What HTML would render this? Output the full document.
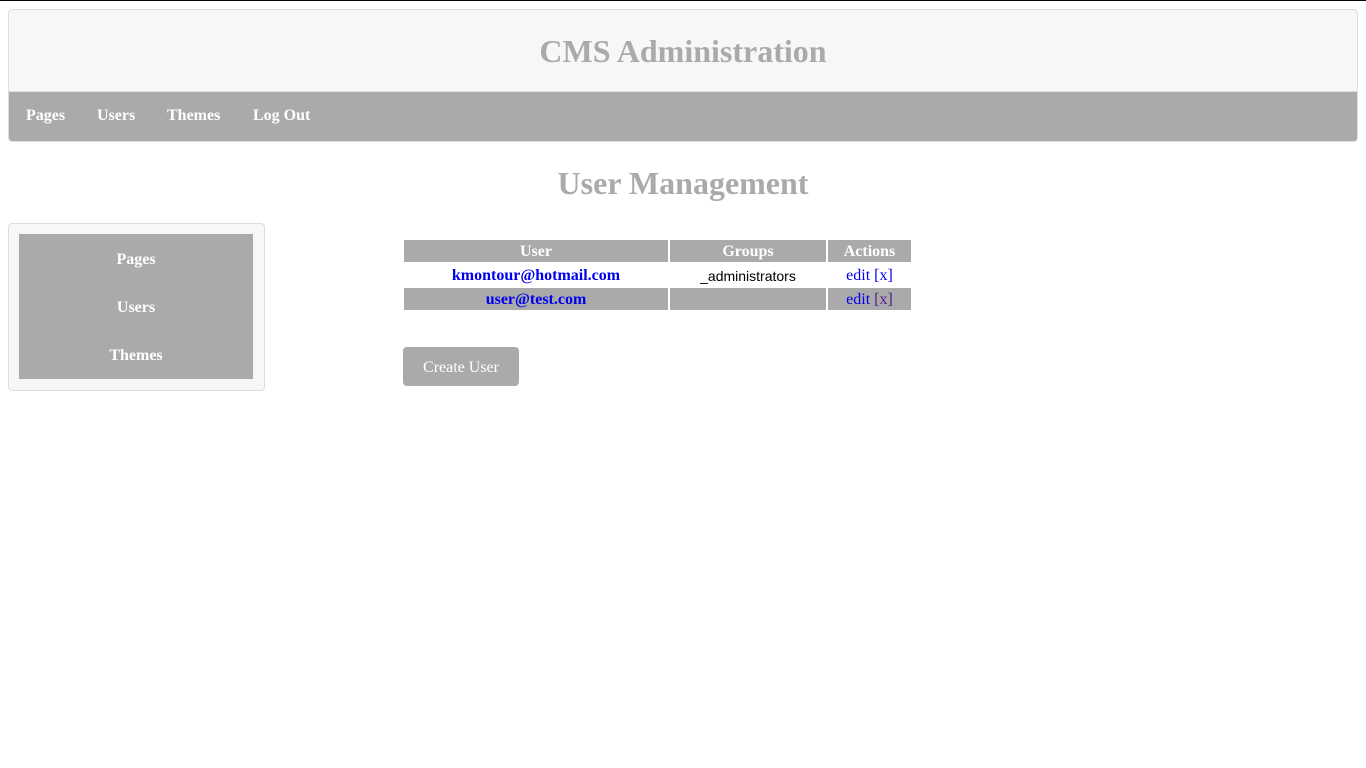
<!DOCTYPE html>
<html><head><style>
body{margin:0;font-family:"Liberation Serif",serif;background:#fff;}
.top{position:absolute;left:0;top:0;width:1366px;height:1px;background:#000;}
.hdr{position:absolute;left:8px;top:9px;width:1348px;height:131px;border:1px solid #ddd;border-radius:4px;background:#f7f7f7;overflow:hidden;}
.hdr h1{margin:0;position:absolute;top:21px;width:100%;text-align:center;font-size:32px;color:#aaa;font-weight:bold;line-height:40px;}
.nav{position:absolute;left:0;top:81px;width:100%;height:49px;background:#aaa;border-top:1px solid #ddd;}
.nav a{position:absolute;top:15px;color:#fff;font-weight:bold;font-size:16px;text-decoration:none;}
h2{position:absolute;top:163px;width:1366px;text-align:center;margin:0;font-size:32px;color:#aaa;line-height:40px;}
.side{position:absolute;left:8px;top:223px;width:255px;height:166px;border:1px solid #ddd;border-radius:4px;background:#f7f7f7;}
.side .in{position:absolute;left:10px;top:10px;width:234px;height:145px;background:#aaa;}
.side a{position:absolute;width:100%;text-align:center;color:#fff;font-weight:bold;font-size:16px;}
table{position:absolute;left:402px;top:238px;border-spacing:2px;font-size:16px;}
td,th{padding:1px 0 0 0;height:21px;text-align:center;}
th{background:#aaa;color:#fff;}
.g{background:#aaa;}
.u{color:#00e;font-weight:bold;}
.e{color:#00e;}
.btn{position:absolute;left:403px;top:347px;width:116px;height:39px;background:#aaa;border-radius:4px;color:#fff;font-size:16px;text-align:center;line-height:41px;}
</style></head><body>
<div class="top"></div>
<div class="hdr"><h1>CMS Administration</h1>
<div class="nav"><a style="left:17px">Pages</a><a style="left:88px">Users</a><a style="left:158px">Themes</a><a style="left:244px">Log Out</a></div></div>
<h2>User Management</h2>
<div class="side"><div class="in"><a style="top:17px">Pages</a><a style="top:65px">Users</a><a style="top:113px">Themes</a></div></div>
<table>
<tr><th style="width:264px">User</th><th style="width:156px">Groups</th><th style="width:83px">Actions</th></tr>
<tr><td class="u">kmontour@hotmail.com</td><td style="font-family:'Liberation Sans',sans-serif;font-size:14px">_administrators</td><td class="e">edit [x]</td></tr>
<tr><td class="u g">user@test.com</td><td class="g"></td><td class="g e">edit <span style="color:#551a8b">[x]</span></td></tr>
</table>
<div class="btn">Create User</div>
</body></html>
